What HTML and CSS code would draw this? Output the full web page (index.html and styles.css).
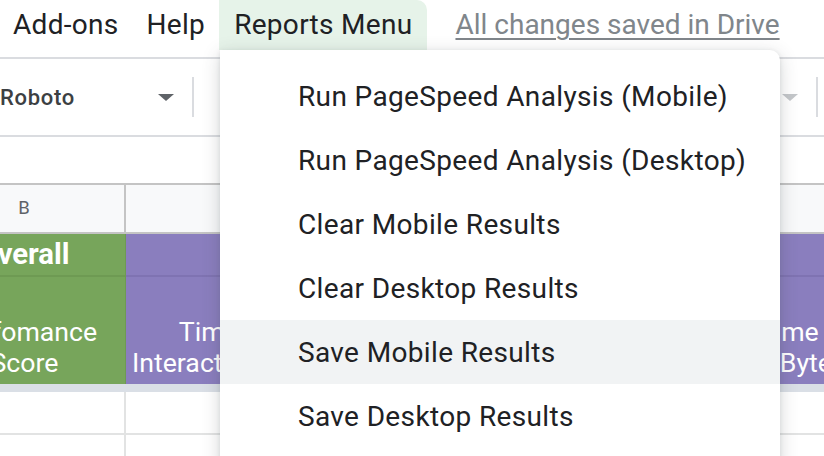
FILE: index.html
```html
<!DOCTYPE html>
<html>
<head>
<meta charset="utf-8">
<link rel="stylesheet" href="styles.css">
</head>
<body>
<div class="app">
  <div class="menubar">
    <span class="mitem">Add-ons</span>
    <span class="mitem">Help</span>
    <span class="mitem active">Reports Menu</span>
    <span class="saved">All changes saved in Drive</span>
  </div>
  <div class="toolbar">
    <div class="fontsel">
      <span class="fontname">Roboto</span>
      <span class="caret"></span>
    </div>
    <span class="sep"></span>
    <div class="tb-fill"></div>
    <span class="caret light"></span>
    <span class="sep end"></span>
  </div>
  <div class="formulabar"></div>
  <div class="sheet">
    <div class="row hdr">
      <div class="c cb">B</div>
      <div class="c cc"></div>
      <div class="c cd"></div>
      <div class="c ce"></div>
    </div>
    <div class="row r1">
      <div class="c cb green"><b>Overall</b></div>
      <div class="c purple span"></div>
    </div>
    <div class="row r2">
      <div class="c cb green center"><span>Perfomance</span><span>Score</span></div>
      <div class="c cc purple right"><span class="l1">Time to</span><span class="l2">Interactive</span></div>
      <div class="c cd purple"></div>
      <div class="c ce purple right"><span class="l1">Time to</span><span class="l2">First Byte</span></div>
    </div>
    <div class="freeze"></div>
    <div class="row r3">
      <div class="c cb"></div>
      <div class="c cc"></div>
      <div class="c cd"></div>
      <div class="c ce"></div>
    </div>
    <div class="row r3">
      <div class="c cb"></div>
      <div class="c cc"></div>
      <div class="c cd"></div>
      <div class="c ce"></div>
    </div>
  </div>

  <div class="dropdown">
    <div class="ditem">Run PageSpeed Analysis (Mobile)</div>
    <div class="ditem">Run PageSpeed Analysis (Desktop)</div>
    <div class="ditem">Clear Mobile Results</div>
    <div class="ditem">Clear Desktop Results</div>
    <div class="ditem hover">Save Mobile Results</div>
    <div class="ditem">Save Desktop Results</div>
  </div>
</div>
</body>
</html>
```

FILE: styles.css
```css
* { box-sizing: border-box; }
html, body { margin: 0; padding: 0; }
body {
  font-family: Roboto, "Liberation Sans", sans-serif;
  background: #fff;
  color: #202124;
  width: 824px;
  height: 456px;
  overflow: hidden;
}
.app { position: relative; width: 824px; height: 456px; overflow: hidden; }

.menubar {
  height: 57px;
  display: flex;
  align-items: flex-start;
  font-size: 28px;
  color: #202124;
  white-space: nowrap;
}
.mitem {
  height: 50px;
  line-height: 49px;
  padding: 0 14px;
  letter-spacing: 0.3px;
}
.mitem:first-child { padding-left: 13px; }
.mitem.active {
  background: #e6f3e9;
  border-radius: 0 10px 0 0;
  padding: 0 15px 0 15px;
}
.saved {
  margin-left: 28px;
  line-height: 49px;
  color: #80868b;
  text-decoration: underline;
  text-underline-offset: 4px;
  text-decoration-thickness: 2px;
}

.toolbar {
  height: 80px;
  border-top: 2px solid #dadce0;
  border-bottom: 2px solid #dadce0;
  display: flex;
  align-items: center;
}
.fontsel {
  width: 176px;
  display: flex;
  align-items: center;
  justify-content: space-between;
  padding-right: 2px;
}
.fontname {
  font-size: 22px;
  font-weight: 500;
  letter-spacing: 0.7px;
  color: #3c4043;
}
.caret {
  width: 0; height: 0;
  border-left: 8px solid transparent;
  border-right: 8px solid transparent;
  border-top: 7px solid #5f6368;
}
.caret.light { border-top-color: #c4c7ca; }
.sep {
  width: 2px;
  height: 40px;
  background: #dadce0;
  margin-left: 16px;
}
.sep.end { margin-left: 18px; margin-right: 6px; }
.tb-fill { flex: 1; }

.formulabar {
  height: 48px;
  border-bottom: 2px solid #c4c4c4;
}

.sheet {
  margin-left: -72px;
  width: 940px;
}
.row { display: flex; }
.c { flex: none; }
.cb { width: 198px; border-right: 2px solid #e2e3e3; }
.cc { width: 148px; border-right: 2px solid #e2e3e3; }
.cd { width: 280px; border-right: 2px solid #e2e3e3; }
.ce { width: 298px; }

.hdr { height: 49px; background: #f8f9fa; border-bottom: 2px solid #c4c4c4; }
.hdr .c {
  height: 47px;
  line-height: 47px;
  text-align: center;
  font-size: 18.5px;
  color: #5f6368;
}
.hdr .cb { padding-right: 4px; }
.hdr .cb, .hdr .cc, .hdr .cd { border-right: 2px solid #c4c4c4; }

.green { background: #77a55b; color: #fff; }
.purple { background: #8a7ebe; color: #fff; }

.r1 { height: 43px; }
.r1 .c { height: 43px; border-bottom: 2px solid #6e9a53; }
.r1 .purple { border-bottom-color: #7f73b2; }
.r1 .cb {
  border-right: 1px solid #6e9a53;
  font-size: 29.3px;
  line-height: 41px;
  text-align: center;
  padding-right: 6px;
}
.r1 .span { width: 728px; }

.r2 { height: 107px; }
.r2 .c {
  height: 107px;
  font-size: 26.7px;
  line-height: 31px;
  display: flex;
  flex-direction: column;
  justify-content: flex-end;
  padding-bottom: 5px;
  border-right: none;
}
.r2 .cb { border-right: 1px solid #6e9a53; align-items: center; padding-right: 4px; }
.r2 .right { align-items: flex-end; }
.r2 .l1 { padding-right: 5px; }
.r2 .l2 { padding-right: 22px; }
.r2 .ce .l1 { padding-right: 3px; }
.r2 .ce .l2 { padding-right: 20px; }
.r2 .cc .l2 { padding-right: 18px; }

.freeze { height: 8px; background: #dadfe6; }

.r3 { height: 43px; border-bottom: 2px solid #e2e3e3; }
.r3 .c { height: 41px; }

.dropdown {
  position: absolute;
  left: 220px;
  top: 50px;
  width: 560px;
  height: 420px;
  background: #fff;
  border-radius: 0 10px 0 0;
  box-shadow: 0 4px 18px rgba(60,64,67,0.22), 0 1px 4px rgba(60,64,67,0.12);
  padding-top: 14px;
}
.ditem {
  height: 64px;
  line-height: 65px;
  padding-left: 78px;
  font-size: 28px;
  letter-spacing: 0.36px;
  color: #202124;
  white-space: nowrap;
}
.ditem.hover { background: #f1f3f4; }
```
